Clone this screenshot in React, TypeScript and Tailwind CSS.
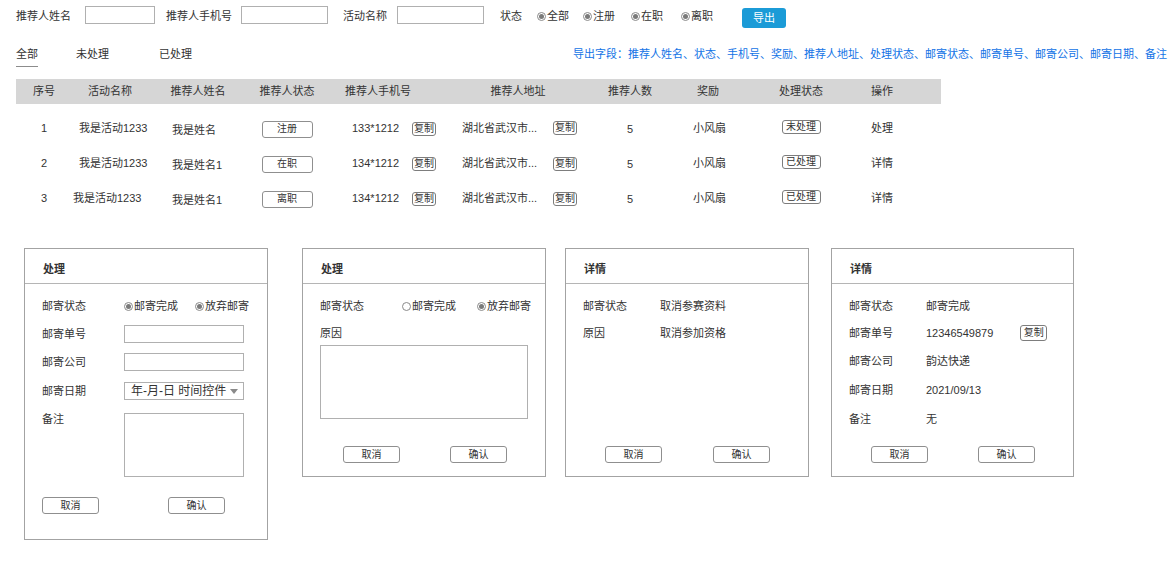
import React from "react";

const FONT = { fontFamily: '"Liberation Sans", "Noto Sans CJK SC", sans-serif' };

function Radio({ checked = true, label, className = "" }: { checked?: boolean; label: string; className?: string }) {
  return (
    <span className={"flex items-center whitespace-nowrap " + className}>
      <span className="flex h-[9px] w-[9px] items-center justify-center rounded-full border border-[#8a8a8a] bg-white">
        {checked && <span className="h-[5px] w-[5px] rounded-full bg-[#7a7a7a]" />}
      </span>
      <span className="ml-[1px] text-[11px] leading-none">{label}</span>
    </span>
  );
}

function CopyBtn({ className = "" }: { className?: string }) {
  return (
    <span className={"flex h-[14px] w-[24px] shrink-0 items-center justify-center whitespace-nowrap rounded-[3px] border border-[#7d7d7d] text-[10px] leading-none " + className}>
      复制
    </span>
  );
}

function Btn({ label, className = "" }: { label: string; className?: string }) {
  return (
    <span className={"flex h-[17px] w-[57px] items-center justify-center rounded-[3px] border border-[#8f8f8f] bg-white text-[10px] leading-none " + className}>
      {label}
    </span>
  );
}

function Input({ className = "" }: { className?: string }) {
  return <span className={"block h-[18px] border border-[#b0b0b0] bg-white " + className} />;
}

type Row = {
  no: string;
  act: string;
  name: string;
  status: string;
  phone: string;
  proc: string;
  op: string;
  actShift: string;
};

const rows: Row[] = [
  { no: "1", act: "我是活动1233", name: "我是姓名", status: "注册", phone: "133*1212", proc: "未处理", op: "处理", actShift: "ml-[7px]" },
  { no: "2", act: "我是活动1233", name: "我是姓名1", status: "在职", phone: "134*1212", proc: "已处理", op: "详情", actShift: "ml-[7px]" },
  { no: "3", act: "我是活动1233", name: "我是姓名1", status: "离职", phone: "134*1212", proc: "已处理", op: "详情", actShift: "ml-[1px]" },
];

const COLS = "grid-cols-[56px_76px_100px_78px_104px_176px_48px_108px_78px_84px_17px]";

function PanelHeader({ title }: { title: string }) {
  return (
    <div className="flex h-[35px] items-center border-b border-[#b5b5b5] pl-[18px] pt-[6px] text-[11px] font-bold leading-none">
      {title}
    </div>
  );
}

function FieldRow({ label, children, className = "" }: { label: string; children?: React.ReactNode; className?: string }) {
  return (
    <div className={"flex h-[18px] items-center " + className}>
      <span className="w-[82px] text-[11px] leading-none">{label}</span>
      {children}
    </div>
  );
}

function InfoRow({ label, value, className = "", children }: { label: string; value: string; className?: string; children?: React.ReactNode }) {
  return (
    <div className={"flex h-[18px] items-center " + className}>
      <span className="w-[77px] text-[11px] leading-none">{label}</span>
      <span className="text-[11px] leading-none">{value}</span>
      {children}
    </div>
  );
}

export default function App() {
  return (
    <div className="h-[565px] w-[1168px] overflow-hidden bg-white text-[#333333]" style={FONT}>
      {/* filter bar */}
      <div className="flex h-[21px] items-center pl-[16px] pt-[0px] mt-[6px] text-[11px] leading-none">
        <span className="w-[69px]">推荐人姓名</span>
        <Input className="w-[70px] -mt-[3px]" />
        <span className="ml-[11px] w-[75px]">推荐人手机号</span>
        <Input className="w-[87px] -mt-[3px]" />
        <span className="ml-[15px] w-[54px]">活动名称</span>
        <Input className="w-[87px] -mt-[3px]" />
        <span className="ml-[16px] w-[37px]">状态</span>
        <Radio label="全部" className="w-[46px]" />
        <Radio label="注册" className="w-[48px]" />
        <Radio label="在职" className="w-[50px]" />
        <Radio label="离职" className="w-[61px]" />
        <span className="flex h-[20px] w-[44px] items-center justify-center rounded-[3px] bg-[#1b9bd7] text-[11px] text-white mt-[3px]">
          导出
        </span>
      </div>

      {/* tabs */}
      <div className="mt-[17px] flex h-[20px] items-center pl-[16px] text-[11px] leading-none">
        <span className="relative w-[60px]">
          全部
          <span className="absolute left-0 top-[17px] h-[1px] w-[22px] bg-[#8c8c8c]" />
        </span>
        <span className="w-[83px]">未处理</span>
        <span className="w-[414px]">已处理</span>
        <span className="whitespace-nowrap text-[#1273e6]">
          导出字段：推荐人姓名、状态、手机号、奖励、推荐人地址、处理状态、邮寄状态、邮寄单号、邮寄公司、邮寄日期、备注
        </span>
      </div>

      {/* table */}
      <div className="ml-[16px] mt-[15px] w-[925px] text-[11px] leading-none">
        <div className={"grid h-[25px] items-center bg-[#d6d6d6] text-center " + COLS}>
          <span>序号</span>
          <span>活动名称</span>
          <span>推荐人姓名</span>
          <span>推荐人状态</span>
          <span>推荐人手机号</span>
          <span>推荐人地址</span>
          <span>推荐人数</span>
          <span>奖励</span>
          <span>处理状态</span>
          <span>操作</span>
          <span />
        </div>
        <div className="pt-[7px]">
          {rows.map((r) => (
            <div key={r.no} className={"grid h-[35px] items-center " + COLS}>
              <span className="text-center">{r.no}</span>
              <span className={"whitespace-nowrap " + r.actShift}>{r.act}</span>
              <span className="mt-[3px] pl-[24px]">{r.name}</span>
              <span className="flex justify-center mt-[1px]">
                <span className="flex h-[17px] w-[51px] items-center justify-center rounded-[3px] border border-[#8f8f8f] text-[10px]">
                  {r.status}
                </span>
              </span>
              <span className="flex items-center pl-[26px]">
                <span className="w-[60px] shrink-0 whitespace-nowrap">{r.phone}</span>
                <CopyBtn />
              </span>
              <span className="flex items-center pl-[32px]">
                <span className="w-[91px] shrink-0 whitespace-nowrap">湖北省武汉市...</span>
                <CopyBtn className={r.no === "1" ? "-mt-[2px]" : "mt-[1px]"} />
              </span>
              <span className="mt-[2px] text-center">5</span>
              <span className="pl-[39px]">小风扇</span>
              <span className="flex justify-center -mt-[3px]">
                <span className="flex h-[14px] w-[39px] items-center justify-center rounded-[3px] border border-[#7d7d7d] text-[10px]">
                  {r.proc}
                </span>
              </span>
              <span className="text-center">{r.op}</span>
              <span />
            </div>
          ))}
        </div>
      </div>

      {/* panels */}
      <div className="mt-[32px] flex items-start text-[11px]">
        {/* panel 1 */}
        <div className="ml-[24px] flex h-[292px] w-[244px] flex-col border border-[#a3a3a3]">
          <PanelHeader title="处理" />
          <div className="flex flex-col pl-[17px] pt-[13px]">
            <FieldRow label="邮寄状态">
              <Radio label="邮寄完成" className="w-[71px]" />
              <Radio label="放弃邮寄" />
            </FieldRow>
            <FieldRow label="邮寄单号" className="mt-[10px]">
              <Input className="w-[120px]" />
            </FieldRow>
            <FieldRow label="邮寄公司" className="mt-[10px]">
              <Input className="w-[120px]" />
            </FieldRow>
            <FieldRow label="邮寄日期" className="mt-[11px]">
              <span className="flex h-[18px] w-[120px] items-center justify-between border border-[#b0b0b0] pl-[6px] pr-[5px] text-[12px] leading-none">
                <span>年-月-日 时间控件</span>
                <svg width="8" height="5" viewBox="0 0 8 5">
                  <path d="M0 0 L8 0 L4 5 Z" fill="#8a8a8a" />
                </svg>
              </span>
            </FieldRow>
            <div className="mt-[13px] flex items-start">
              <span className="mt-[1px] w-[82px] text-[11px] leading-none">备注</span>
              <span className="block h-[64px] w-[120px] border border-[#b0b0b0]" />
            </div>
            <div className="mt-[20px] flex">
              <Btn label="取消" />
              <Btn label="确认" className="ml-[69px]" />
            </div>
          </div>
        </div>

        {/* panel 2 */}
        <div className="ml-[34px] flex h-[229px] w-[244px] flex-col border border-[#a3a3a3]">
          <PanelHeader title="处理" />
          <div className="flex flex-1 flex-col pl-[17px] pt-[13px] pb-[13px]">
            <FieldRow label="邮寄状态">
              <Radio checked={false} label="邮寄完成" className="w-[75px]" />
              <Radio label="放弃邮寄" />
            </FieldRow>
            <FieldRow label="原因" className="mt-[9px]" />
            <span className="mt-[3px] block h-[74px] w-[208px] border border-[#b0b0b0]" />
            <div className="mt-auto flex pl-[23px]">
              <Btn label="取消" />
              <Btn label="确认" className="ml-[50px]" />
            </div>
          </div>
        </div>

        {/* panel 3 */}
        <div className="ml-[19px] flex h-[229px] w-[244px] flex-col border border-[#a3a3a3]">
          <PanelHeader title="详情" />
          <div className="flex flex-1 flex-col pl-[17px] pt-[13px] pb-[13px]">
            <InfoRow label="邮寄状态" value="取消参赛资料" />
            <InfoRow label="原因" value="取消参加资格" className="mt-[9px]" />
            <div className="mt-auto flex pl-[22px]">
              <Btn label="取消" />
              <Btn label="确认" className="ml-[51px]" />
            </div>
          </div>
        </div>

        {/* panel 4 */}
        <div className="ml-[22px] flex h-[229px] w-[243px] flex-col border border-[#a3a3a3]">
          <PanelHeader title="详情" />
          <div className="flex flex-1 flex-col pl-[17px] pt-[13px] pb-[13px]">
            <InfoRow label="邮寄状态" value="邮寄完成" />
            <InfoRow label="邮寄单号" value="12346549879" className="mt-[9px]">
              <span className="ml-[27px] flex h-[16px] w-[27px] items-center justify-center rounded-[3px] border border-[#7d7d7d] text-[10px] leading-none">
                复制
              </span>
            </InfoRow>
            <InfoRow label="邮寄公司" value="韵达快递" className="mt-[10px]" />
            <InfoRow label="邮寄日期" value="2021/09/13" className="mt-[11px]" />
            <InfoRow label="备注" value="无" className="mt-[11px]" />
            <div className="mt-auto flex pl-[22px]">
              <Btn label="取消" />
              <Btn label="确认" className="ml-[50px]" />
            </div>
          </div>
        </div>
      </div>
    </div>
  );
}
